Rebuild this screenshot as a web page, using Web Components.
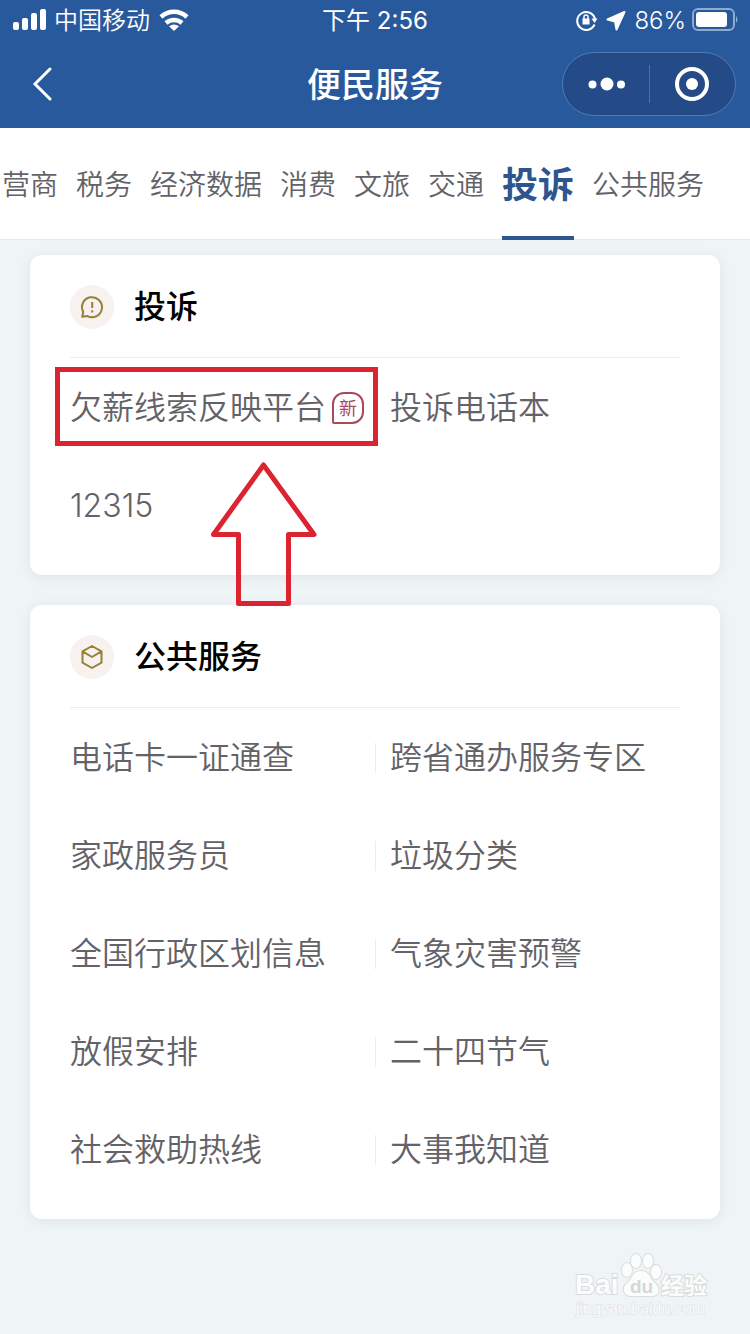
<!DOCTYPE html>
<html lang="zh-CN">
<head>
<meta charset="utf-8">
<meta name="viewport" content="width=device-width, initial-scale=1">
<title>便民服务</title>
<style>
  body {
    margin: 0;
    min-height: 100vh;
    background: #eff5f6;
    color: #636268;
    font-family: Inter, "Noto Sans CJK SC", sans-serif;
    font-weight: 350;
    overflow-x: hidden;
  }
  main { display: grid; gap: 30px; padding: 15px 30px 0; }
</style>
</head>
<body>
<header>
  <status-bar></status-bar>
  <nav-bar>便民服务</nav-bar>
</header>
<tab-bar>
  <tab-item>营商</tab-item>
  <tab-item>税务</tab-item>
  <tab-item>经济数据</tab-item>
  <tab-item>消费</tab-item>
  <tab-item>文旅</tab-item>
  <tab-item>交通</tab-item>
  <tab-item active>投诉</tab-item>
  <tab-item>公共服务</tab-item>
</tab-bar>
<main>
  <service-card>
    <svg slot="icon" width="24" height="24" viewBox="0 0 24 24" fill="none" stroke="#9a8131" stroke-width="2" stroke-linejoin="round"><path d="M2.2 21.7L3.3 17.1A10 10 0 1 1 7.5 21.1Z"/><path d="M12.2 7v6M12.2 15.3v2.2"/></svg>
    <span slot="title">投诉</span>
    <service-cell marked badge="新">欠薪线索反映平台</service-cell>
    <service-cell>投诉电话本</service-cell>
    <service-cell>12315</service-cell>
  </service-card>
  <service-card>
    <svg slot="icon" width="24" height="24" viewBox="0 0 24 24" fill="none" stroke="#9a8131" stroke-width="2" stroke-linejoin="round"><path d="M12 1L21.5 6.3V17.7L12 23L2.5 17.7V6.3ZM2.5 6.3L12 12L21.5 6.3"/></svg>
    <span slot="title">公共服务</span>
    <service-cell>电话卡一证通查</service-cell>
    <service-cell>跨省通办服务专区</service-cell>
    <service-cell>家政服务员</service-cell>
    <service-cell>垃圾分类</service-cell>
    <service-cell>全国行政区划信息</service-cell>
    <service-cell>气象灾害预警</service-cell>
    <service-cell>放假安排</service-cell>
    <service-cell>二十四节气</service-cell>
    <service-cell>社会救助热线</service-cell>
    <service-cell>大事我知道</service-cell>
  </service-card>
</main>
<water-mark></water-mark>

<script>
const define = (name, html, setup) => {
  const template = document.createElement('template');
  template.innerHTML = html;
  customElements.define(name, class extends HTMLElement {
    constructor() {
      super();
      this.attachShadow({ mode: 'open' }).append(template.content.cloneNode(true));
    }
    connectedCallback() { if (setup) setup(this, this.shadowRoot); }
  });
};

define('status-bar', `
<style>
  :host { display: grid; grid-template-columns: 1fr auto 1fr; align-items: center; height: 40px; padding: 0 12px; background: #28599c; color: #fff; font-size: 24px; line-height: 38px; }
  div { display: flex; align-items: center; gap: 8px; }
  span { padding-top: 2px; }
  .right { justify-content: flex-end; }
  .power { gap: 6px; }
  .clock { font-weight: 400; }
  svg { display: block; flex: none; }
</style>
<div>
  <svg width="34" height="24" viewBox="0 0 34 24" fill="#fff"><rect x="1" y="14" width="6" height="8" rx="2"/><rect x="10" y="10" width="6" height="12" rx="2"/><rect x="19" y="5" width="6" height="17" rx="2"/><rect x="28" y="1" width="6" height="21" rx="2"/></svg>
  <span>中国移动</span>
  <svg width="32" height="24" viewBox="0 0 32 24" fill="none" stroke="#fff" stroke-width="4.5"><path d="M3 9a19 19 0 0 1 26 0M8 15a12 12 0 0 1 16 0"/><path d="M11 18.200q5-3.400 10 0l-5 4.800z" fill="#fff" stroke="none"/></svg>
</div>
<span class="clock">下午 2:56</span>
<div class="right">
  <svg width="22" height="22" viewBox="0 0 22 22" fill="none" stroke="#fff" stroke-width="2"><path d="M18.500 15.500A9 9 0 1 1 19 10"/><path d="M15.500 9.500h6l-3 4.500z" fill="#fff" stroke="none"/><rect x="6.500" y="9.500" width="7" height="6" fill="#fff" stroke="none"/><path d="M8 10V8a2 2 0 0 1 4 0v2" stroke-width="1.5"/></svg>
  <svg width="20" height="24" viewBox="6 0 20 24" fill="#fff" stroke="#fff" stroke-width="2" stroke-linejoin="round"><path d="M24.500 4L7.500 11.500L15 13.500L16.500 21.500Z"/></svg>
  <div class="power"><span>86%</span>
  <svg width="46" height="24" viewBox="0 0 46 24" fill="none"><rect x="1" y="1" width="41" height="21" rx="5" stroke="#8faacf" stroke-width="2"/><rect x="4" y="4" width="31" height="15" rx="3" fill="#fff"/><path d="M44 8q3 3.500 0 7z" fill="#8faacf"/></svg></div>
</div>`);

define('nav-bar', `
<style>
  :host { display: grid; grid-template-columns: 1fr auto 1fr; align-items: center; height: 88px; padding: 0 14px; background: #28599c; color: #fff; }
  h1 { margin: 0; padding-top: 2px; font-size: 34px; line-height: 48px; font-weight: 500; }
  button { margin: 0; padding: 0; border: 0; background: none; color: inherit; display: grid; place-items: center; }
  .back { width: 56px; height: 48px; }
  .capsule { justify-self: end; box-sizing: border-box; display: grid; grid-template-columns: 1fr 1px 1fr; align-items: center; width: 174px; height: 64px; border: 1px solid #507bb3; border-radius: 32px; background: #244b88; }
  .capsule button { height: 60px; }
  i { height: 38px; background: #4a70a5; }
</style>
<button class="back" aria-label="返回"><svg width="20" height="34" viewBox="0 0 20 34" fill="none" stroke="#fff" stroke-width="3" stroke-linecap="round"><path d="M18 2L3 17L18 32"/></svg></button>
<h1><slot></slot></h1>
<div class="capsule">
  <button aria-label="更多"><svg width="38" height="14" viewBox="0 0 38 14" fill="#fff"><circle cx="5.500" cy="7.500" r="4"/><circle cx="20" cy="7" r="6.500"/><circle cx="34" cy="7.500" r="4"/></svg></button>
  <i></i>
  <button aria-label="关闭"><svg width="36" height="36" viewBox="0 0 36 36"><circle cx="18" cy="18" r="15" fill="none" stroke="#fff" stroke-width="4"/><circle cx="18" cy="18" r="6" fill="#fff"/></svg></button>
</div>`);

define('tab-bar', `
<style>
  :host { display: block; background: #fff; border-bottom: 1px solid #e6ebec; }
  nav { display: flex; gap: 18px; height: 111px; padding: 0 2px; }
</style>
<nav><slot></slot></nav>`);

define('tab-item', `
<style>
  :host { display: block; flex: none; font-size: 28px; }
  :host([active]) { font-size: 36px; font-weight: 700; color: #2d568f; }
  a { display: block; position: relative; padding-top: 2px; line-height: 110px; color: inherit; text-decoration: none; white-space: nowrap; }
  :host([active]) a::after { content: ""; position: absolute; left: 0; right: 0; bottom: 0; height: 4px; background: #2d568f; }
</style>
<a href="#"><slot></slot></a>`);

define('service-card', `
<style>
  :host { display: block; padding: 0 40px 21px; background: #fff; border-radius: 12px; box-shadow: 0 2px 12px #dde4e6; }
  header { display: flex; align-items: center; gap: 20px; height: 100px; padding-top: 2px; border-bottom: 1px solid #ececee; }
  .disc { display: grid; place-items: center; width: 44px; height: 44px; border-radius: 50%; background: #f7f2f0; }
  h2 { margin: 0; font-size: 32px; line-height: 48px; font-weight: 500; color: #000; }
  .grid { display: grid; grid-template-columns: 1fr 1fr; }
</style>
<header><div class="disc"><slot name="icon"></slot></div><h2><slot name="title"></slot></h2></header>
<div class="grid"><slot></slot></div>`);

define('service-cell', `
<style>
  :host { display: flex; align-items: center; position: relative; height: 96px; padding-top: 2px; font-size: 32px; line-height: 48px; white-space: nowrap; }
  :host(:nth-of-type(even))::before { content: ""; width: 1px; height: 30px; margin-right: 14px; background: #ececee; }
  a { display: flex; align-items: center; gap: 6px; color: inherit; text-decoration: none; }
  .badge { box-sizing: border-box; width: 32px; height: 32px; border: 2px solid #a9495c; border-radius: 12px 12px 12px 2px; color: #a9495c; font-size: 18px; line-height: 30px; text-align: center; font-weight: 400; }
  .frame, .arrow { position: absolute; pointer-events: none; z-index: 1; }
  .frame { box-sizing: border-box; inset: 9px -3px 10px -15px; border: 5px solid #dc2430; }
  .arrow { left: 141px; top: 104px; }
  [hidden] { display: none; }
</style>
<a href="#"><slot></slot><span class="badge" hidden></span></a>
<div class="frame" hidden></div>
<svg class="arrow" hidden width="106" height="146" viewBox="0 0 106 146" fill="none" stroke="#dc2430" stroke-width="5" stroke-linejoin="round"><path d="M52.500 3L103 72.500H77.500V141.500H27.500V72.500H2.500Z"/></svg>`,
(host, root) => {
  if (host.hasAttribute('badge')) {
    const badge = root.querySelector('.badge');
    badge.textContent = host.getAttribute('badge');
    badge.hidden = false;
  }
  if (host.hasAttribute('marked')) {
    root.querySelector('.frame').hidden = false;
    root.querySelector('.arrow').removeAttribute('hidden');
  }
});

define('water-mark', `
<style>
  :host { display: flex; justify-content: flex-end; padding: 32px 38px 0 0; }
  svg { display: block; }
</style>
<svg width="138" height="70" viewBox="0 0 138 70" fill="#fbfcfc" stroke="#d9dddd" stroke-width="2" paint-order="stroke" font-family="Liberation Sans, Noto Sans CJK SC, sans-serif" font-weight="700">
  <text x="1" y="43" font-size="28">Bai</text>
  <ellipse cx="53" cy="19" rx="5" ry="7"/><ellipse cx="62" cy="10" rx="5" ry="7"/><ellipse cx="74" cy="10" rx="5" ry="7"/><ellipse cx="82" cy="21" rx="5" ry="7"/>
  <path d="M67 20C58 20 59 28 53 32C47 37 50 46 58 45H76C86 46 87 37 81 32C76 28 76 20 67 20Z"/>
  <text x="56" y="42" font-size="19" fill="#d3d8d8" stroke="none">du</text>
  <text x="87" y="43" font-size="23">经验</text>
  <text x="2" y="63" font-size="16" font-weight="400" stroke-width="1">jingyan.baidu.com</text>
</svg>`);
</script>
</body>
</html>
